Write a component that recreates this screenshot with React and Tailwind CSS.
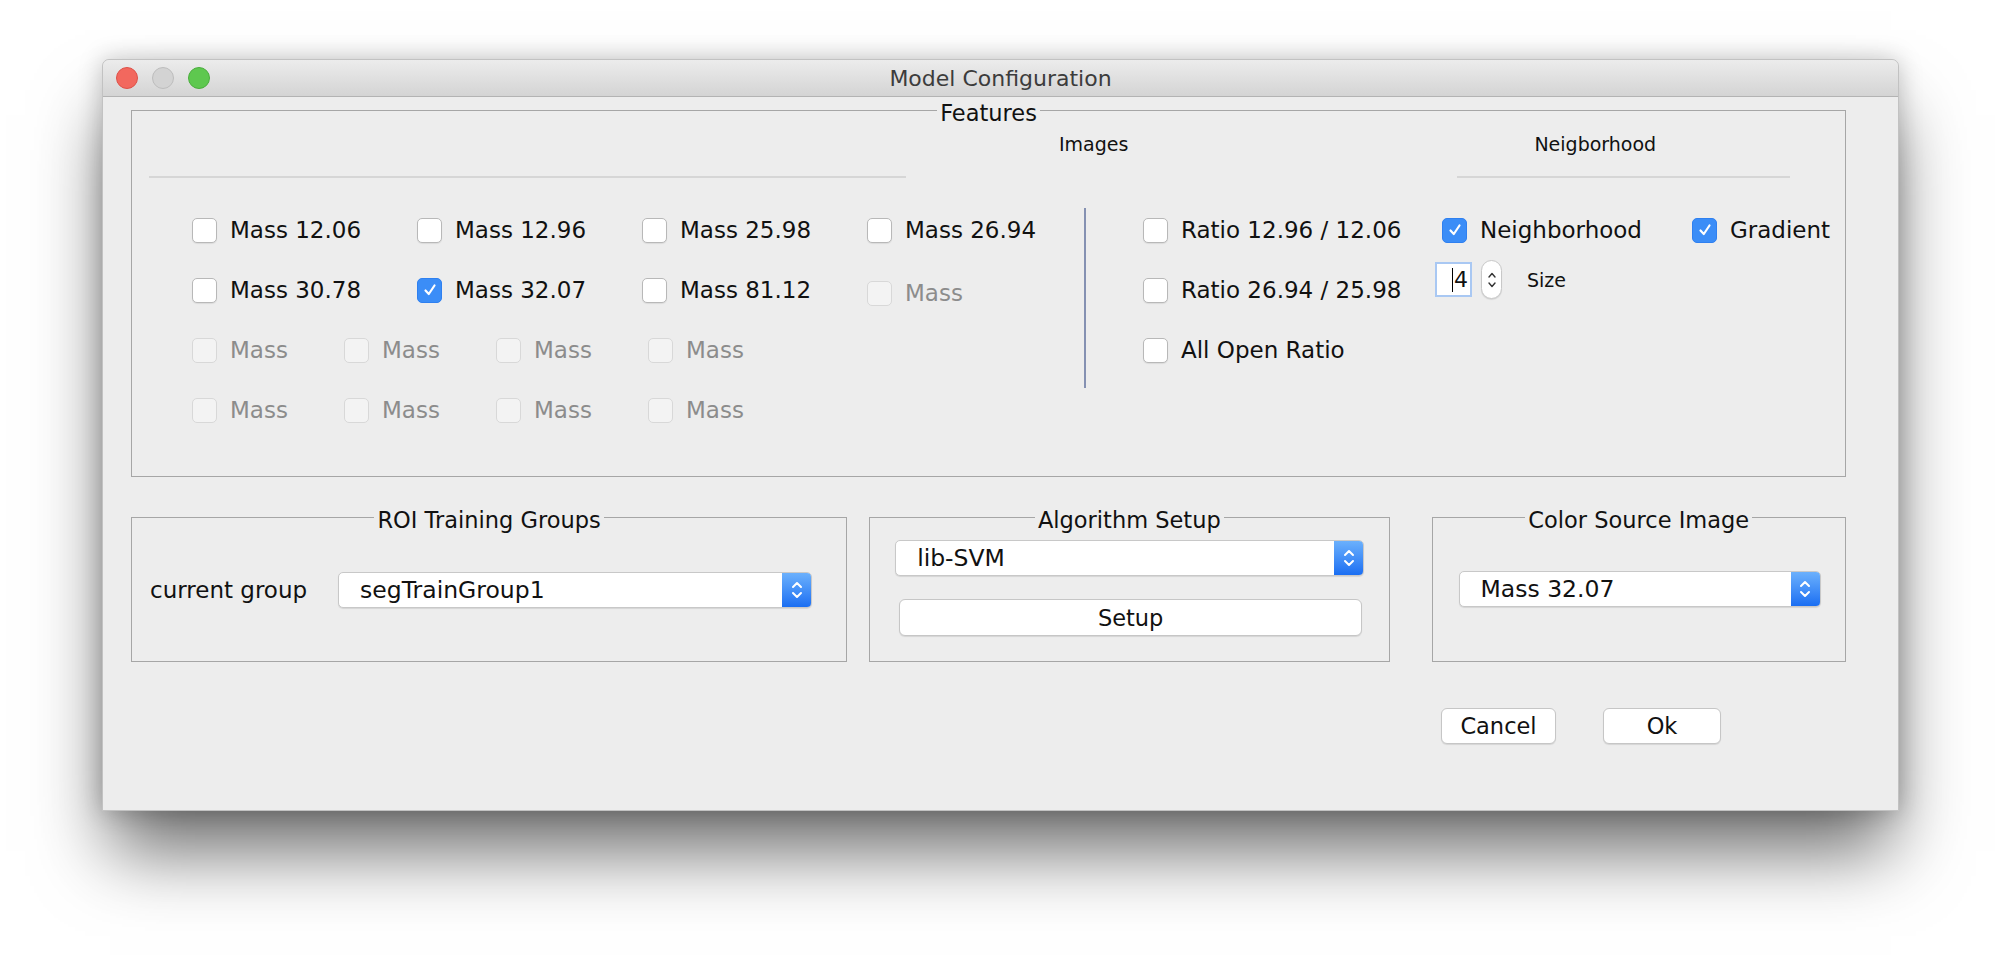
import React from "react";

const CheckMark = () => (
  <svg width="14" height="14" viewBox="0 0 14 14" fill="none">
    <path d="M2.5 7.5 L5.8 11 L11.5 2.5" stroke="white" strokeWidth="2.2" strokeLinecap="round" strokeLinejoin="round" />
  </svg>
);

const Check = ({ label, checked, disabled, className = "" }) => {
  let box = "border-[#b8b8b8] bg-white shadow-[0_1px_1px_rgba(0,0,0,0.08)]";
  if (checked) box = "border-[#2f80f0] bg-[#3b8df7]";
  if (disabled) box = "border-[#d8d8d8] bg-[#f3f3f3]";
  return (
    <div className={`flex items-center gap-[13px] ${className}`}>
      <span className={`w-[25px] h-[25px] shrink-0 rounded-[5px] border flex items-center justify-center ${box}`}>
        {checked && <CheckMark />}
      </span>
      <span className={`text-[23px] leading-[26px] whitespace-nowrap ${disabled ? "text-[#8c8c8c]" : "text-[#111]"}`}>
        {label}
      </span>
    </div>
  );
};

const ComboArrows = () => (
  <svg width="12" height="22" viewBox="0 0 12 22" fill="none">
    <path d="M2 8 L6 4 L10 8" stroke="white" strokeWidth="2" strokeLinecap="round" strokeLinejoin="round" />
    <path d="M2 14 L6 18 L10 14" stroke="white" strokeWidth="2" strokeLinecap="round" strokeLinejoin="round" />
  </svg>
);

const Combo = ({ value, className = "" }) => (
  <div className={`flex h-[36px] rounded-[5px] border border-[#c8c8c8] bg-white overflow-hidden shadow-[0_1px_1px_rgba(0,0,0,0.1)] ${className}`}>
    <span className="flex-1 pl-[21px] text-[23.5px] leading-[34px] text-[#111]">{value}</span>
    <span className="w-[29px] h-full bg-linear-to-b from-[#6bb0fc] to-[#1a6ef2] flex items-center justify-center">
      <ComboArrows />
    </span>
  </div>
);

const Button = ({ label, className = "" }) => (
  <button className={`h-[36px] rounded-[6px] border border-[#c6c6c6] bg-white text-[22.5px] leading-[34px] text-[#111] shadow-[0_1px_1px_rgba(0,0,0,0.1)] ${className}`}>
    {label}
  </button>
);

const Box = ({ title, className = "", children }) => (
  <fieldset className={`border border-[#a6a6a6] ${className}`}>
    <legend className="mx-auto px-[3px] text-[22.5px] leading-[26px] text-[#111]">
      <span className="relative top-[3px]">{title}</span>
    </legend>
    {children}
  </fieldset>
);

const Spinner = () => (
  <div className="flex items-center">
    <div className="w-[37px] h-[35px] border-2 border-[#a9c8f3] bg-white flex items-center justify-end pr-[2px]">
      <span className="w-px h-[24px] bg-black mr-[1px]" />
      <span className="text-[22px] leading-[26px] text-[#111]">4</span>
    </div>
    <div className="ml-[9px] w-[21px] h-[39px] rounded-full border border-[#c8c8c8] bg-white flex items-center justify-center shadow-[0_1px_1px_rgba(0,0,0,0.1)]">
      <svg width="10" height="24" viewBox="0 0 10 24" fill="none">
        <path d="M2 9 L5 5.5 L8 9" stroke="#333" strokeWidth="1.4" strokeLinecap="round" strokeLinejoin="round" />
        <path d="M2 15 L5 18.5 L8 15" stroke="#333" strokeWidth="1.4" strokeLinecap="round" strokeLinejoin="round" />
      </svg>
    </div>
    <span className="ml-[25px] text-[19px] leading-[24px] text-[#111]">Size</span>
  </div>
);

const App = () => {
  return (
    <div className="w-[2000px] h-[956px] bg-white pl-[102px] pt-[59px] overflow-hidden font-['DejaVu_Sans',sans-serif]">
      <div className="w-[1797px] h-[752px] rounded-t-[7px] border border-[#c2c2c2] bg-[#ededed] flex flex-col shadow-[0_48px_70px_-8px_rgba(0,0,0,0.58),0_0_24px_rgba(0,0,0,0.22)]">
        {/* title bar */}
        <div className="h-[37px] shrink-0 rounded-t-[7px] border-b border-[#b3b3b3] bg-linear-to-b from-[#ececec] to-[#d4d4d4] grid grid-cols-[1fr_auto_1fr] items-center">
          <div className="flex items-center gap-[14px] pl-[13px]">
            <span className="w-[22px] h-[22px] rounded-full bg-[#f2685e] border border-[#de5148]" />
            <span className="w-[22px] h-[22px] rounded-full bg-[#d3d3d3] border border-[#bdbdbd]" />
            <span className="w-[22px] h-[22px] rounded-full bg-[#5ec84f] border border-[#4aae3d]" />
          </div>
          <span className="text-[22px] leading-[26px] pt-[2px] text-[#3c3c3c]">Model Configuration</span>
          <div />
        </div>

        <div className="flex flex-col pl-[28px] pr-[52px]">
          <Box title="Features" className="h-[380px]">
            <div className="flex mt-[9px] text-[19px] leading-[24px] text-[#111]">
              <span className="ml-[927px]">Images</span>
              <span className="ml-[406px]">Neigborhood</span>
            </div>
            <div className="flex mt-[20px]">
              <span className="ml-[17px] w-[757px] h-[2px] bg-[#d6d6d6]" />
              <span className="ml-[551px] w-[333px] h-[2px] bg-[#d6d6d6]" />
            </div>

            <div className="flex mt-[22px] pl-[60px]">
              <div className="w-[892px] flex flex-col">
                <div className="h-[60px] flex items-center">
                  <Check label="Mass 12.06" className="w-[225px]" />
                  <Check label="Mass 12.96" className="w-[225px]" />
                  <Check label="Mass 25.98" className="w-[225px]" />
                  <Check label="Mass 26.94" />
                </div>
                <div className="h-[60px] flex items-center">
                  <Check label="Mass 30.78" className="w-[225px]" />
                  <Check label="Mass 32.07" checked className="w-[225px]" />
                  <Check label="Mass 81.12" className="w-[225px]" />
                  <Check label="Mass" disabled className="mt-[6px]" />
                </div>
                <div className="h-[60px] flex items-center">
                  <Check label="Mass" disabled className="w-[152px]" />
                  <Check label="Mass" disabled className="w-[152px]" />
                  <Check label="Mass" disabled className="w-[152px]" />
                  <Check label="Mass" disabled />
                </div>
                <div className="h-[60px] flex items-center">
                  <Check label="Mass" disabled className="w-[152px]" />
                  <Check label="Mass" disabled className="w-[152px]" />
                  <Check label="Mass" disabled className="w-[152px]" />
                  <Check label="Mass" disabled />
                </div>
              </div>

              <span className="w-[2px] h-[180px] mt-[8px] bg-[#8591b2]" />

              <div className="ml-[57px] flex flex-col">
                <div className="h-[60px] flex items-center">
                  <Check label="Ratio 12.96 / 12.06" className="w-[299px]" />
                  <Check label="Neighborhood" checked className="w-[250px]" />
                  <Check label="Gradient" checked />
                </div>
                <div className="h-[60px] flex items-start">
                  <Check label="Ratio 26.94 / 25.98" className="w-[292px] h-[60px]" />
                  <Spinner />
                </div>
                <div className="h-[60px] flex items-center">
                  <Check label="All Open Ratio" />
                </div>
              </div>
            </div>
          </Box>

          <div className="flex items-start mt-[27px]">
            <Box title="ROI Training Groups" className="w-[717px] h-[158px]">
              <div className="flex items-center mt-[42px] pl-[18px]">
                <span className="text-[23px] leading-[26px] text-[#111]">current group</span>
                <Combo value="segTrainGroup1" className="ml-[31px] w-[474px]" />
              </div>
            </Box>

            <Box title="Algorithm Setup" className="ml-[22px] w-[521px] h-[158px]">
              <Combo value="lib-SVM" className="mt-[10px] ml-[25px] w-[469px]" />
              <Button label="Setup" className="mt-[23px] ml-[29px] w-[463px] h-[37px]" />
            </Box>

            <Box title="Color Source Image" className="ml-[42px] w-[415px] h-[158px]">
              <Combo value="Mass 32.07" className="mt-[41px] ml-[26px] w-[362px]" />
            </Box>
          </div>

          <div className="flex justify-end gap-[47px] pr-[125px] mt-[46px]">
            <Button label="Cancel" className="w-[115px]" />
            <Button label="Ok" className="w-[118px]" />
          </div>
        </div>
      </div>
    </div>
  );
};

export default App;
